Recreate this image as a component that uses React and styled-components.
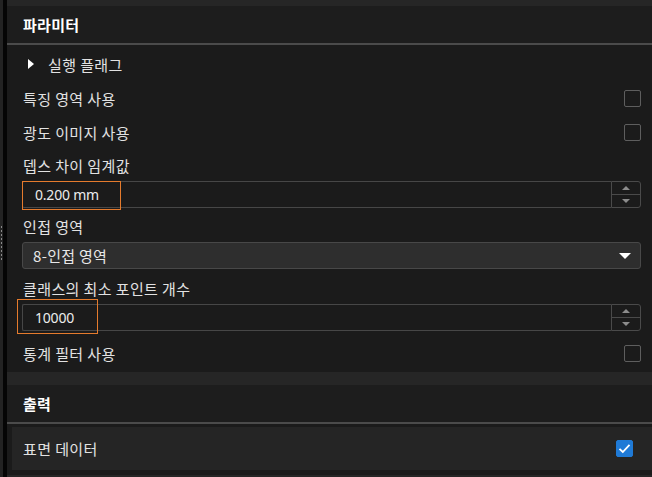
import React from "react";
import styled, { createGlobalStyle } from "styled-components";

const GlobalStyle = createGlobalStyle`
  html, body {
    margin: 0;
    padding: 0;
    background: #1b1b1b;
  }

  body {
    font-family: "Noto Sans", "Noto Sans CJK KR", sans-serif;
    color: #e4e4e4;
    font-size: 14px;
  }
`;

const Layout = styled.div`
  display: flex;
  width: 652px;
  height: 477px;
  overflow: hidden;
  background: #1b1b1b;
`;

const Rail = styled.div`
  width: 3px;
  flex-shrink: 0;
  background: #232323;
  border-right: 4px solid #050505;
  display: flex;
  flex-direction: column;
`;

const Grip = styled.div`
  margin-top: 226px;
  margin-left: 1px;
  width: 1px;
  height: 34px;
  background: repeating-linear-gradient(
    to bottom,
    #8a8a8a 0 2px,
    transparent 2px 4px
  );
`;

const Panel = styled.div`
  flex: 1;
  display: flex;
  flex-direction: column;
  min-width: 0;

  & > * {
    flex-shrink: 0;
  }
`;

const Strip = styled.div`
  height: ${(p) => p.$h}px;
  background: #262626;
`;

const SectionHeader = styled.div`
  height: 37px;
  display: flex;
  align-items: center;
  padding-left: 16px;
  background: #1d1d1d;
  border-bottom: 2px solid #4b4b4b;
  color: #ffffff;
  font-family: "Noto Sans CJK KR", sans-serif;
  font-size: 15px;
  font-weight: 700;
  letter-spacing: 0.3px;
`;

const Body = styled.div`
  display: flex;
  flex-direction: column;
  padding: 2px 11px 2px 16px;
  background: #1b1b1b;
`;

const Row = styled.div`
  height: 34px;
  display: flex;
  align-items: center;
  justify-content: space-between;
  margin-top: ${(p) => p.$mt || 0}px;
`;

const Label = styled.span`
  font-family: "Noto Sans CJK KR", sans-serif;
  font-size: 15px;
  letter-spacing: 0.4px;
  color: #e2e2e2;
  line-height: 1;
`;

const Expander = styled.div`
  display: flex;
  align-items: center;
  gap: 14px;
  padding-left: 5px;
`;

const Caret = styled.span`
  width: 0;
  height: 0;
  border-top: 5px solid transparent;
  border-bottom: 5px solid transparent;
  border-left: 6px solid #ffffff;
`;

const Check = styled.span`
  width: 15px;
  height: 15px;
  border: 1.5px solid ${(p) => (p.$on ? "#1f7ad6" : "#5e5e5e")};
  border-radius: 2px;
  background: ${(p) => (p.$on ? "#1f7ad6" : "transparent")};
  display: flex;
  align-items: center;
  justify-content: center;
`;

const Field = styled.div`
  display: flex;
  flex-direction: column;
  margin-bottom: ${(p) => p.$mb || 0}px;
`;

const FieldLabel = styled.div`
  height: 32px;
  display: flex;
  align-items: center;
`;

const Control = styled.div`
  position: relative;
  display: flex;
  height: 27px;
  box-sizing: border-box;
  margin-left: -1px;
`;

const NumberBox = styled.div`
  flex: 1;
  display: flex;
  align-items: center;
  padding-left: 12px;
  border: 1px solid #474747;
  border-right: none;
  border-radius: 2px 0 0 2px;
  font-family: "Noto Sans", sans-serif;
  font-size: 14px;
  color: #ececec;
  letter-spacing: -0.2px;
`;

const Spinner = styled.div`
  width: 28px;
  display: flex;
  flex-direction: column;
  border: 1px solid #4a4a4a;
  border-radius: 0 3px 3px 0;
`;

const SpinButton = styled.div`
  flex: 1;
  display: flex;
  align-items: center;
  justify-content: center;
  & + & {
    border-top: 1px solid #4a4a4a;
  }
`;

const SmallArrow = styled.span`
  width: 0;
  height: 0;
  border-left: 4px solid transparent;
  border-right: 4px solid transparent;
  ${(p) =>
    p.$up
      ? "border-bottom: 4px solid #8c8c8c;"
      : "border-top: 4px solid #8c8c8c;"}
`;

const Select = styled.div`
  flex: 1;
  display: flex;
  align-items: center;
  justify-content: space-between;
  padding: 0 9px 0 10px;
  background: #2e2e2e;
  border: 1px solid #484848;
  border-radius: 3px;
  font-family: "Noto Sans CJK KR", sans-serif;
  font-size: 15px;
  letter-spacing: 0.3px;
  color: #e8e8e8;
`;

const DropArrow = styled.span`
  width: 0;
  height: 0;
  border-left: 6px solid transparent;
  border-right: 6px solid transparent;
  border-top: 6px solid #ffffff;
`;

const Highlight = styled.div`
  position: absolute;
  left: ${(p) => p.$x}px;
  top: ${(p) => p.$y}px;
  width: ${(p) => p.$w}px;
  height: ${(p) => p.$h}px;
  border: 1px solid #e57b2d;
  box-sizing: border-box;
  pointer-events: none;
`;

const OutputRow = styled.div`
  margin: 3px 0 5px 5px;
  height: 43px;
  display: flex;
  align-items: center;
  justify-content: space-between;
  padding: 0 19px 0 11px;
  background: #252525;
`;

const CheckMark = () => (
  <svg width="13" height="11" viewBox="0 0 13 11">
    <path d="M1.5 5.8 L4.8 9 L11.5 1.8" fill="none" stroke="#ffffff" strokeWidth="1.8" />
  </svg>
);

const NumberField = ({ value, hl }) => (
  <Control>
    <NumberBox>{value}</NumberBox>
    <Spinner>
      <SpinButton>
        <SmallArrow $up />
      </SpinButton>
      <SpinButton>
        <SmallArrow />
      </SpinButton>
    </Spinner>
    <Highlight $x={hl.x} $y={hl.y} $w={hl.w} $h={hl.h} />
  </Control>
);

export default function App() {
  return (
    <>
      <GlobalStyle />
      <Layout>
        <Rail>
          <Grip />
        </Rail>
        <Panel>
          <Strip $h={6} />
          <SectionHeader>파라미터</SectionHeader>
          <Body>
            <Row>
              <Expander>
                <Caret />
                <Label>실행 플래그</Label>
              </Expander>
            </Row>
            <Row>
              <Label>특징 영역 사용</Label>
              <Check />
            </Row>
            <Row>
              <Label>광도 이미지 사용</Label>
              <Check />
            </Row>
            <Field $mb={2}>
              <FieldLabel>
                <Label>뎁스 차이 임계값</Label>
              </FieldLabel>
              <NumberField value="0.200 mm" hl={{ x: 0, y: 0, w: 99, h: 29 }} />
            </Field>
            <Field $mb={3}>
              <FieldLabel>
                <Label>인접 영역</Label>
              </FieldLabel>
              <Control>
                <Select>
                  8-인접 영역
                  <DropArrow />
                </Select>
              </Control>
            </Field>
            <Field>
              <FieldLabel>
                <Label>클래스의 최소 포인트 개수</Label>
              </FieldLabel>
              <NumberField value="10000" hl={{ x: -5, y: -5, w: 81, h: 35 }} />
            </Field>
            <Row $mt={5}>
              <Label>통계 필터 사용</Label>
              <Check />
            </Row>
          </Body>
          <Strip $h={13} />
          <SectionHeader>출력</SectionHeader>
          <OutputRow>
            <Label>표면 데이터</Label>
            <Check $on>
              <CheckMark />
            </Check>
          </OutputRow>
          <Strip $h={10} />
        </Panel>
      </Layout>
    </>
  );
}
